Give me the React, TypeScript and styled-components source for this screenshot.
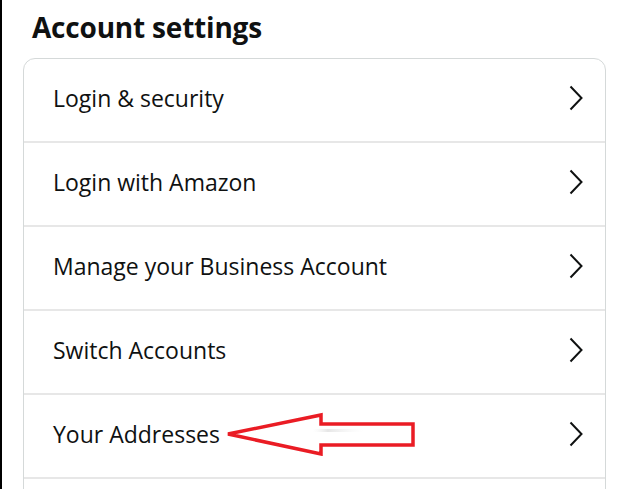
import styled, { createGlobalStyle } from "styled-components";

const GlobalStyle = createGlobalStyle`
  html, body {
    margin: 0;
    padding: 0;
    background: #ffffff;
  }
  body {
    font-family: "Open Sans", "Noto Sans", Arial, sans-serif;
    color: #0f1111;
  }
`;

const rows = [
  "Login & security",
  "Login with Amazon",
  "Manage your Business Account",
  "Switch Accounts",
  "Your Addresses",
  "",
];

export default function App() {
  return (
    <>
      <GlobalStyle />
      <Page>
        <Title>Account settings</Title>
        <Card>
          {rows.map((label, i) => (
            <Row key={i}>
              <Label>{label}</Label>
              {label && <Chevron />}
              {label === "Your Addresses" && <Arrow />}
            </Row>
          ))}
        </Card>
      </Page>
    </>
  );
}

function Chevron() {
  return (
    <ChevronIcon viewBox="0 0 14 26" width="14" height="26">
      <path d="M1.5 1.5 L12.5 13 L1.5 24.5" fill="none" stroke="#0f1111" strokeWidth="2" />
    </ChevronIcon>
  );
}

function Arrow() {
  return (
    <ArrowSvg width="192" height="46" viewBox="0 0 192 46">
      <defs>
        <linearGradient id="streak" x1="0" x2="1">
          <stop offset="0" stopColor="#f2f2f2" stopOpacity="0" />
          <stop offset="0.3" stopColor="#e6e6e6" />
          <stop offset="1" stopColor="#f4f4f4" stopOpacity="0" />
        </linearGradient>
      </defs>
      <rect x="88" y="19" width="50" height="3" fill="url(#streak)" />
      <polygon
        points="3,24 96,5 96,14 188,14 188,35 96,35 96,44"
        fill="none"
        stroke="#ea1c24"
        strokeWidth="3.5"
        strokeLinejoin="miter"
      />
    </ArrowSvg>
  );
}

const Page = styled.div`
  height: 489px;
  overflow: hidden;
  border-left: 2px solid #000;
  padding: 9px 22px 0 21px;
  box-sizing: border-box;
`;

const Title = styled.h2`
  margin: 0 0 12px 9px;
  font-size: 28px;
  font-weight: 700;
  line-height: 37px;
  letter-spacing: -0.2px;
`;

const Card = styled.div`
  border: 1px solid #d5d9d9;
  border-radius: 12px;
  background: #fff;
`;

const Row = styled.div`
  position: relative;
  display: flex;
  align-items: center;
  justify-content: space-between;
  padding: 0 22px 5px 29px;
  box-sizing: border-box;
  height: 84px;
  border-bottom: 2px solid #e7e7e7;
`;

const Label = styled.span`
  font-size: 23px;
  font-weight: 400;
  color: #0f1111;
`;

const ChevronIcon = styled.svg`
  display: block;
`;

const ArrowSvg = styled.svg`
  position: absolute;
  left: 201px;
  top: 15px;
`;
